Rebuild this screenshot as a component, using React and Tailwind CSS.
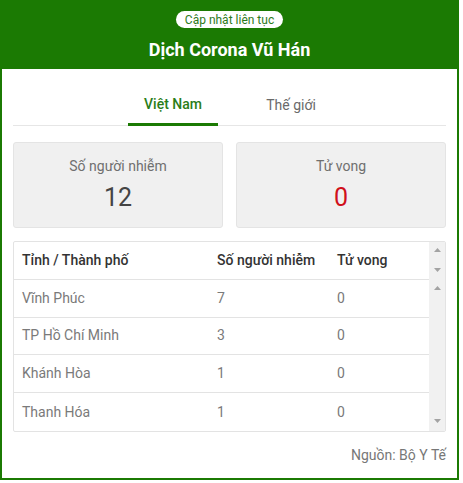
const rows = [
  { name: 'Vĩnh Phúc', cases: 7, deaths: 0 },
  { name: 'TP Hồ Chí Minh', cases: 3, deaths: 0 },
  { name: 'Khánh Hòa', cases: 1, deaths: 0 },
  { name: 'Thanh Hóa', cases: 1, deaths: 0 },
];

const ArrowUp = () => (
  <svg width="7" height="4" viewBox="0 0 7 4" className="fill-[#a3a3a3]">
    <path d="M0 4 L3.5 0 L7 4 Z" />
  </svg>
);

const ArrowDown = () => (
  <svg width="7" height="4" viewBox="0 0 7 4" className="fill-[#a3a3a3]">
    <path d="M0 0 L7 0 L3.5 4 Z" />
  </svg>
);

const StatCard = ({ label, value, valueClass }) => (
  <div className="flex-1 h-[86px] bg-[#f0f0f0] border border-[#e4e4e4] rounded-[3px] flex flex-col items-center pt-[13px]">
    <span className="text-[14px] leading-[20px] text-[#6f6f6f]">{label}</span>
    <span className={`text-[25px] leading-[30px] mt-[7px] ${valueClass}`}>{value}</span>
  </div>
);

export default function App() {
  return (
    <div className="w-[459px] h-[480px] border-x-2 border-b-2 border-[#1b7a03] bg-white flex flex-col font-['Roboto',sans-serif]">
      {/* Header */}
      <div className="h-[69px] bg-[#1b7a03] -mx-[2px] flex flex-col items-center pt-[11px] shrink-0">
        <span className="bg-white rounded-full px-[9px] h-[17px] flex items-center text-[12px] text-[#2d7a1b] leading-none">
          Cập nhật liên tục
        </span>
        <h1 className="text-white font-bold text-[18px] leading-[24px] mt-[10px]">Dịch Corona Vũ Hán</h1>
      </div>

      <div className="px-[11px] flex flex-col">
        {/* Tabs */}
        <div className="pt-[16px] border-b border-[#e6e6e6] flex justify-center gap-[28px] pl-[5px]">
          <div className="w-[90px] h-[41px] -mb-px border-b-[3px] border-[#1b7a03] flex items-center justify-center text-[14px] font-medium text-[#2a7d18]">
            Việt Nam
          </div>
          <div className="w-[90px] h-[41px] -mb-px flex items-center justify-center text-[14px] text-[#6a6a6a]">
            Thế giới
          </div>
        </div>

        {/* Stats */}
        <div className="flex gap-[13px] mt-[16px]">
          <StatCard label="Số người nhiễm" value="12" valueClass="text-[#444]" />
          <StatCard label="Tử vong" value="0" valueClass="text-[#d0101b]" />
        </div>

        {/* Table */}
        <div className="mt-[13px] h-[191px] border border-[#e3e3e3] rounded-[2px] flex overflow-hidden">
          <div className="flex-1 flex flex-col">
            <div className="h-[38px] border-b border-[#e3e3e3] flex items-center text-[14px] font-medium text-[#333]">
              <span className="w-[203px] pl-[8px]">Tỉnh / Thành phố</span>
              <span className="w-[120px]">Số người nhiễm</span>
              <span>Tử vong</span>
            </div>
            {rows.map((r, i) => (
              <div
                key={r.name}
                className={`h-[38px] flex items-center text-[14px] text-[#7a7a7a] ${i < rows.length - 1 ? 'border-b border-[#e3e3e3]' : ''}`}
              >
                <span className="w-[203px] pl-[8px]">{r.name}</span>
                <span className="w-[120px]">{r.cases}</span>
                <span>{r.deaths}</span>
              </div>
            ))}
          </div>
          {/* Scrollbar */}
          <div className="w-[16px] bg-[#f1f1f1] flex flex-col items-center">
            <div className="h-[38px] flex flex-col items-center justify-between pt-[6px] pb-[8px]">
              <ArrowUp />
              <ArrowDown />
            </div>
            <div className="flex-1 flex flex-col items-center justify-between pt-[6px] pb-[8px]">
              <ArrowUp />
              <ArrowDown />
            </div>
          </div>
        </div>

        {/* Source */}
        <div className="text-right text-[14px] text-[#777] mt-[13px] leading-[20px]">Nguồn: Bộ Y Tế</div>
      </div>
    </div>
  );
}
